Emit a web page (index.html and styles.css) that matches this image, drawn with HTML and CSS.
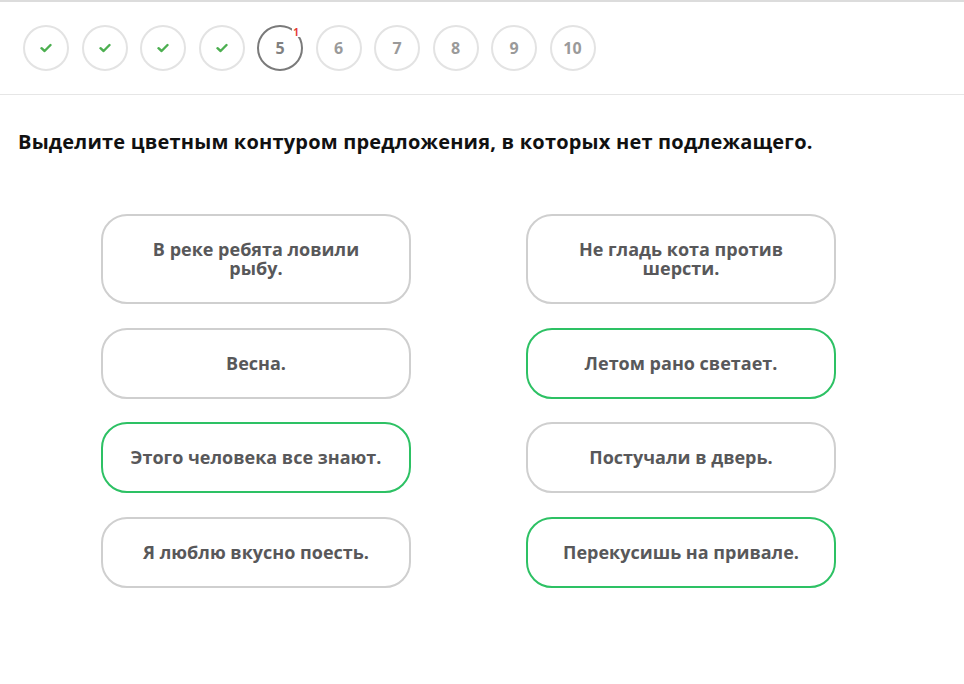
FILE: index.html
```html
<!DOCTYPE html>
<html lang="ru">
<head>
  <meta charset="UTF-8">
  <meta name="viewport" content="width=device-width, initial-scale=1.0">
  <title>Задание 5</title>
  <link rel="stylesheet" href="styles.css">
</head>
<body>
  <!-- ===== STEP NAVIGATION ===== -->
  <nav class="steps">
    <span class="step done"><svg viewBox="0 0 12 10"><path d="M1.5 5.2 L4.6 8 L10.5 2" /></svg></span>
    <span class="step done"><svg viewBox="0 0 12 10"><path d="M1.5 5.2 L4.6 8 L10.5 2" /></svg></span>
    <span class="step done"><svg viewBox="0 0 12 10"><path d="M1.5 5.2 L4.6 8 L10.5 2" /></svg></span>
    <span class="step done"><svg viewBox="0 0 12 10"><path d="M1.5 5.2 L4.6 8 L10.5 2" /></svg></span>
    <span class="step current">5<span class="badge">1</span></span>
    <span class="step">6</span>
    <span class="step">7</span>
    <span class="step">8</span>
    <span class="step">9</span>
    <span class="step">10</span>
  </nav>

  <!-- ===== TASK ===== -->
  <main class="task">
    <h1 class="task-title">Выделите цветным контуром предложения, в которых нет подлежащего.</h1>

    <div class="options">
      <button class="option">В реке ребята ловили рыбу.</button>
      <button class="option">Не гладь кота против шерсти.</button>
      <button class="option">Весна.</button>
      <button class="option selected">Летом рано светает.</button>
      <button class="option selected">Этого человека все знают.</button>
      <button class="option">Постучали в дверь.</button>
      <button class="option">Я люблю вкусно поесть.</button>
      <button class="option selected">Перекусишь на привале.</button>
    </div>
  </main>
</body>
</html>
```

FILE: styles.css
```css
html, body {
  margin: 0; padding: 0;
  background: #fff;
  font-family: "Open Sans", "Noto Sans", sans-serif;
}

body { border-top: 2px solid #dcdcdc; }

/* ---------------- Step circles ---------------- */
.steps {
  display: flex;
  gap: 12.5px;
  padding: 23px 23px 23px;
  border-bottom: 1px solid #e6e6e6;
}

.step {
  position: relative;
  width: 46px; height: 46px;
  box-sizing: border-box;
  border: 2px solid #e3e3e3;
  border-radius: 50%;
  display: flex; align-items: center; justify-content: center;
  font-size: 16px; font-weight: 700;
  color: #9a9a9a;
}

.step svg {
  width: 12px; height: 10px;
  fill: none;
  stroke: #4caf50;
  stroke-width: 2.4;
  stroke-linecap: round;
  stroke-linejoin: round;
}

.step.current { border-color: #7a7a7a; color: #808080; }

/* little attempt counter on the current step */
.badge {
  position: absolute;
  top: 0; right: 1px;
  padding: 0 1px;
  background: #fff;
  font-size: 10px; font-weight: 700;
  line-height: 10px;
  color: #e53935;
}

/* ---------------- Task ---------------- */
.task { padding: 0 18px; }

.task-title {
  margin: 33px 0 59px;
  font-size: 20px; font-weight: 700;
  line-height: 27px;
  letter-spacing: 0.2px;
  color: #111;
}

.options {
  display: grid;
  grid-template-columns: 310px 310px;
  column-gap: 115px;
  row-gap: 23.5px;
  padding-left: 83px;
}

.option {
  box-sizing: border-box;
  min-height: 71px;
  padding: 24px 26px;
  border: 2px solid #cfcfcf;
  border-radius: 26px;
  background: #fff;
  font: 700 18px/19px "Open Sans", "Noto Sans", sans-serif;
  color: #58585a;
  text-align: center;
  cursor: pointer;
}

.option.selected { border-color: #2dc164; }
```
